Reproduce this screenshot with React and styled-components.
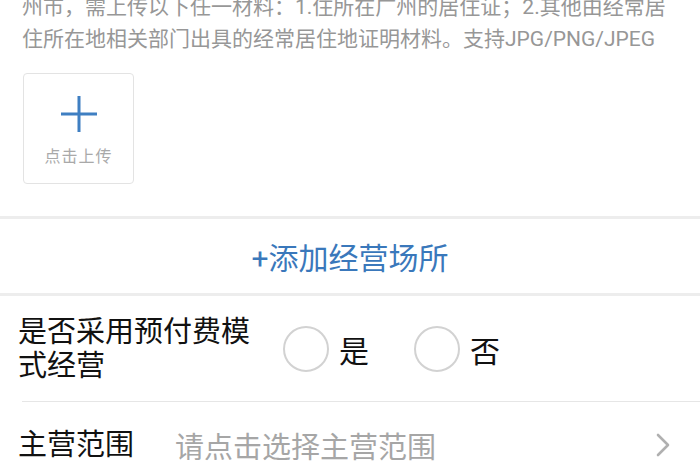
import React from "react";
import styled, { createGlobalStyle } from "styled-components";

const GlobalStyle = createGlobalStyle`
  html, body {
    margin: 0;
    padding: 0;
    background: #ffffff;
    overflow: hidden;
  }
  body {
    font-family: Roboto, "Noto Sans CJK SC", "Noto Sans", sans-serif;
  }
`;

const Page = styled.div`
  width: 700px;
  height: 470px;
  overflow: hidden;
  background: #fff;
`;

const UploadSection = styled.section`
  padding: 0 22px 32px 22px;
`;

const Desc = styled.p`
  margin: -9px 0 0 0;
  font-size: 21px;
  line-height: 32px;
  color: #979797;
`;

const UploadBox = styled.div`
  margin-top: 18px;
  margin-left: 1px;
  width: 109px;
  height: 109px;
  border: 1px solid #e3e3e3;
  border-radius: 4px;
  display: flex;
  flex-direction: column;
  align-items: center;
  box-sizing: content-box;
`;

const PlusIcon = styled.svg`
  margin-top: 21px;
  width: 38px;
  height: 38px;
`;

const UploadText = styled.span`
  margin-top: 10px;
  font-size: 16px;
  color: #a9a9a9;
  letter-spacing: 1px;
`;

const Divider = styled.div`
  height: ${(p) => (p.thick ? "3px" : "1px")};
  background: ${(p) => (p.thick ? "#ededed" : "#e6e6e6")};
  margin-left: ${(p) => (p.inset ? "22px" : "0")};
`;

const AddRow = styled.div`
  height: 74px;
  display: flex;
  align-items: center;
  justify-content: center;
  font-size: 30px;
  color: #3a78bb;
`;

const Row = styled.div`
  display: flex;
  align-items: center;
  padding: 0 18px;
  height: ${(p) => p.h}px;
  font-size: 29px;
  color: #111;
`;

const Label = styled.div`
  width: ${(p) => p.w}px;
  line-height: 34px;
  flex-shrink: 0;
`;

const Options = styled.div`
  display: flex;
  align-items: center;
  gap: 45px;
  margin-left: 25px;
`;

const Option = styled.label`
  display: flex;
  align-items: center;
  gap: 10px;
  font-size: 30px;
`;

const Circle = styled.span`
  width: 42px;
  height: 42px;
  border: 2px solid #d2d2d2;
  border-radius: 50%;
  display: inline-block;
`;

const Placeholder = styled.div`
  flex: 1;
  color: #a6a6a6;
  margin-left: 41px;
`;

const Chevron = styled.svg`
  width: 18px;
  height: 26px;
  margin-right: 10px;
`;

export default function App() {
  return (
    <Page>
      <GlobalStyle />
      <UploadSection>
        <Desc>
          州市，需上传以下任一材料：1.住所在广州的居住证；2.其他由经常居
          <br />
          住所在地相关部门出具的经常居住地证明材料。支持JPG/PNG/JPEG
        </Desc>
        <UploadBox>
          <PlusIcon viewBox="0 0 38 38">
            <path d="M19 1 V37 M1 19 H37" stroke="#3f7fc2" strokeWidth="3" fill="none" />
          </PlusIcon>
          <UploadText>点击上传</UploadText>
        </UploadBox>
      </UploadSection>
      <Divider thick />
      <AddRow>+添加经营场所</AddRow>
      <Divider thick />
      <Row h={105}>
        <Label w={240}>是否采用预付费模式经营</Label>
        <Options>
          <Option>
            <Circle />
            是
          </Option>
          <Option>
            <Circle />
            否
          </Option>
        </Options>
      </Row>
      <Divider inset />
      <Row h={86}>
        <Label w={116}>主营范围</Label>
        <Placeholder>请点击选择主营范围</Placeholder>
        <Chevron viewBox="0 0 18 26">
          <path d="M4 3 L14 13 L4 23" stroke="#b0b0b0" strokeWidth="2.6" fill="none" strokeLinecap="round" strokeLinejoin="round" />
        </Chevron>
      </Row>
    </Page>
  );
}
